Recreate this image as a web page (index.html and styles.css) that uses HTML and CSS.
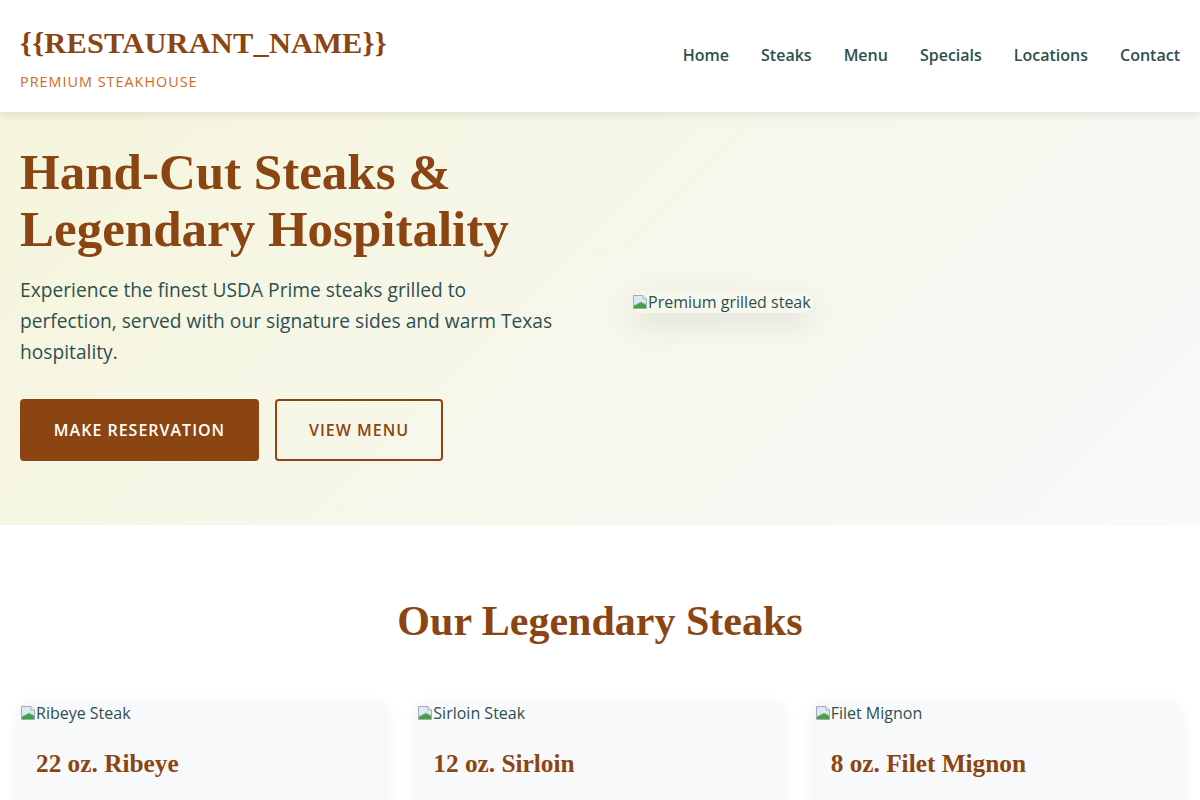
FILE: index.html
```html
<!DOCTYPE html>
<html lang="en">
<head>
<meta charset="utf-8">
<title>{{RESTAURANT_NAME}} - Premium Steakhouse</title>
<link rel="stylesheet" href="styles.css">
</head>
<body>
<header class="site-header">
  <div class="logo">
    <div class="logo-title">{{RESTAURANT_NAME}}</div>
    <div class="logo-sub">PREMIUM STEAKHOUSE</div>
  </div>
  <nav class="nav">
    <a href="#">Home</a>
    <a href="#">Steaks</a>
    <a href="#">Menu</a>
    <a href="#">Specials</a>
    <a href="#">Locations</a>
    <a href="#">Contact</a>
  </nav>
</header>

<section class="hero">
  <div class="hero-inner">
    <div class="hero-text">
      <h1 class="hero-title">Hand-Cut Steaks &amp;<br>Legendary Hospitality</h1>
      <p class="hero-lead">Experience the finest USDA Prime steaks grilled to perfection, served with our signature sides and warm Texas hospitality.</p>
      <div class="hero-actions">
        <a class="btn btn-primary" href="#">MAKE RESERVATION</a>
        <a class="btn btn-outline" href="#">VIEW MENU</a>
      </div>
    </div>
    <div class="hero-media">
      <span class="img-alt hero-img"><svg class="broken" width="16" height="16" viewBox="0 0 16 16"><path d="M1.5 1.5h9.5l3.5 3.5v9.5h-13z" fill="#dfe8f3" stroke="#a3adb8"/><path d="M11 1.5v3.5h3.5" fill="#f4f6f9" stroke="#a3adb8"/><path d="M2 14V11.5L9 8l5 2.5V14z" fill="#43a047"/><path d="M2 11.5L9 8l5 2.5" fill="none" stroke="#8fd18f"/></svg>Premium grilled steak</span>
    </div>
  </div>
</section>

<section class="steaks">
  <h2 class="section-title">Our Legendary Steaks</h2>
  <div class="cards">
    <article class="card">
      <span class="img-alt"><svg class="broken" width="16" height="16" viewBox="0 0 16 16"><path d="M1.5 1.5h9.5l3.5 3.5v9.5h-13z" fill="#dfe8f3" stroke="#a3adb8"/><path d="M11 1.5v3.5h3.5" fill="#f4f6f9" stroke="#a3adb8"/><path d="M2 14V11.5L9 8l5 2.5V14z" fill="#43a047"/><path d="M2 11.5L9 8l5 2.5" fill="none" stroke="#8fd18f"/></svg>Ribeye Steak</span>
      <div class="card-body"><h3 class="card-title">22 oz. Ribeye</h3></div>
    </article>
    <article class="card">
      <span class="img-alt"><svg class="broken" width="16" height="16" viewBox="0 0 16 16"><path d="M1.5 1.5h9.5l3.5 3.5v9.5h-13z" fill="#dfe8f3" stroke="#a3adb8"/><path d="M11 1.5v3.5h3.5" fill="#f4f6f9" stroke="#a3adb8"/><path d="M2 14V11.5L9 8l5 2.5V14z" fill="#43a047"/><path d="M2 11.5L9 8l5 2.5" fill="none" stroke="#8fd18f"/></svg>Sirloin Steak</span>
      <div class="card-body"><h3 class="card-title">12 oz. Sirloin</h3></div>
    </article>
    <article class="card">
      <span class="img-alt"><svg class="broken" width="16" height="16" viewBox="0 0 16 16"><path d="M1.5 1.5h9.5l3.5 3.5v9.5h-13z" fill="#dfe8f3" stroke="#a3adb8"/><path d="M11 1.5v3.5h3.5" fill="#f4f6f9" stroke="#a3adb8"/><path d="M2 14V11.5L9 8l5 2.5V14z" fill="#43a047"/><path d="M2 11.5L9 8l5 2.5" fill="none" stroke="#8fd18f"/></svg>Filet Mignon</span>
      <div class="card-body"><h3 class="card-title">8 oz. Filet Mignon</h3></div>
    </article>
  </div>
</section>
</body>
</html>
```
FILE: styles.css
```css
* { box-sizing: border-box; }
html, body { margin: 0; padding: 0; }
body {
  font-family: "Open Sans", "Liberation Sans", sans-serif;
  color: #2F4F4F;
  background: #ffffff;
  overflow: hidden;
}
a { text-decoration: none; }

.site-header {
  position: relative;
  z-index: 2;
  display: flex;
  justify-content: space-between;
  align-items: center;
  padding: 21px 20px 20px;
  background: #ffffff;
  box-shadow: 0 2px 10px rgba(0, 0, 0, 0.1);
}
.logo-title {
  font-family: "Liberation Serif", "Times New Roman", serif;
  font-weight: 700;
  font-size: 30.4px;
  line-height: 44px;
  color: #8B4513;
  letter-spacing: 0.2px;
}
.logo-sub {
  margin-top: 7px;
  font-size: 14.4px;
  line-height: 20px;
  letter-spacing: 1px;
  color: #D2691E;
}
.nav {
  display: flex;
  gap: 32px;
  margin-top: -3px;
}
.nav a {
  font-size: 16px;
  font-weight: 600;
  color: #2F4F4F;
}

.hero {
  background: linear-gradient(135deg, #F5F5DC 0%, #F8F9FA 100%);
  padding: 32px 20px 64px;
}
.hero-inner {
  display: grid;
  grid-template-columns: 1fr 1fr;
  gap: 64px;
  align-items: center;
}
.hero-title {
  margin: 0;
  font-family: "Liberation Serif", "Times New Roman", serif;
  font-weight: 700;
  font-size: 51px;
  line-height: 57px;
  color: #8B4513;
}
.hero-lead {
  max-width: 540px;
  margin: 16px 0 0;
  font-size: 19.2px;
  line-height: 31px;
  color: #2F4F4F;
}
.hero-actions {
  display: flex;
  gap: 16px;
  margin-top: 32px;
}
.btn {
  display: inline-flex;
  align-items: center;
  justify-content: center;
  height: 62px;
  border-radius: 4px;
  font-size: 16px;
  font-weight: 600;
  letter-spacing: 1px;
}
.btn-primary {
  width: 239px;
  background: #8B4513;
  color: #ffffff;
}
.btn-outline {
  width: 168px;
  border: 2px solid #8B4513;
  color: #8B4513;
}

.img-alt {
  display: inline-flex;
  align-items: center;
  font-size: 16px;
  line-height: 22px;
  color: #2F4F4F;
}
.broken { flex: none; }
.hero-img {
  border-radius: 10px;
  box-shadow: 0 10px 30px rgba(0, 0, 0, 0.1);
  padding-right: 2px;
}

.steaks {
  padding: 70px 20px 40px;
}
.section-title {
  margin: 0 0 54px;
  text-align: center;
  font-family: "Liberation Serif", "Times New Roman", serif;
  font-weight: 700;
  font-size: 42px;
  line-height: 52px;
  color: #8B4513;
}
.cards {
  display: grid;
  grid-template-columns: repeat(3, 1fr);
  gap: 32px;
}
.card {
  background: #F8F9FA;
  border-radius: 10px;
  box-shadow: 0 4px 15px rgba(0, 0, 0, 0.08);
  overflow: hidden;
  min-height: 200px;
}
.card .img-alt {
  display: flex;
  margin-top: 1px;
}
.card-body {
  padding: 24px 16px;
}
.card-title {
  margin: 0;
  font-family: "Liberation Serif", "Times New Roman", serif;
  font-weight: 700;
  font-size: 25.3px;
  line-height: 30px;
  color: #8B4513;
}
```
